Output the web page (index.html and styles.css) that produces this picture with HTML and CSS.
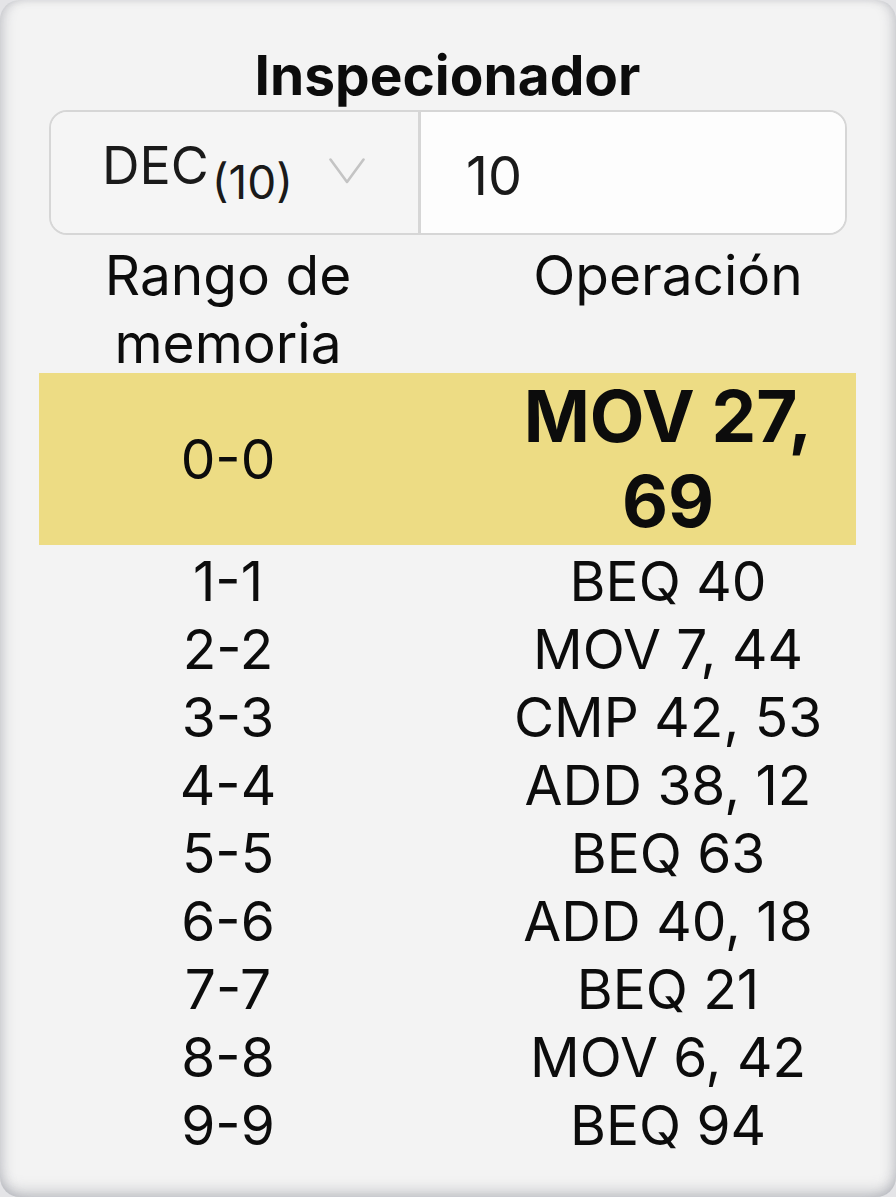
FILE: index.html
```html
<!DOCTYPE html>
<html lang="es">
<head>
<meta charset="utf-8">
<title>Inspecionador</title>
<link rel="stylesheet" href="styles.css">
</head>
<body>
<div class="panel">
  <h1 class="title">Inspecionador</h1>
  <div class="input-group">
    <div class="base-select">
      <span class="base-label">DEC<sub class="base-sub">(10)</sub></span>
      <svg class="chevron" viewBox="0 0 36 26" width="36" height="26" aria-hidden="true">
        <polyline points="1.5,1.5 18,24 34.5,1.5" fill="none" stroke="#c4c4c4" stroke-width="2.6" stroke-linecap="round" stroke-linejoin="round"/>
      </svg>
    </div>
    <div class="value-field">10</div>
  </div>
  <div class="table">
    <div class="row head">
      <div class="cell c1">Rango de<br>memoria</div>
      <div class="cell c2">Operación</div>
    </div>
    <div class="row current">
      <div class="cell c1">0-0</div>
      <div class="cell c2">MOV 27,<br>69</div>
    </div>
    <div class="row"><div class="cell c1">1-1</div><div class="cell c2">BEQ 40</div></div>
    <div class="row"><div class="cell c1">2-2</div><div class="cell c2">MOV 7, 44</div></div>
    <div class="row"><div class="cell c1">3-3</div><div class="cell c2">CMP 42, 53</div></div>
    <div class="row"><div class="cell c1">4-4</div><div class="cell c2">ADD 38, 12</div></div>
    <div class="row"><div class="cell c1">5-5</div><div class="cell c2">BEQ 63</div></div>
    <div class="row"><div class="cell c1">6-6</div><div class="cell c2">ADD 40, 18</div></div>
    <div class="row"><div class="cell c1">7-7</div><div class="cell c2">BEQ 21</div></div>
    <div class="row"><div class="cell c1">8-8</div><div class="cell c2">MOV 6, 42</div></div>
    <div class="row"><div class="cell c1">9-9</div><div class="cell c2">BEQ 94</div></div>
  </div>
</div>
</body>
</html>
```
FILE: styles.css
```css
html, body {
  margin: 0;
  padding: 0;
  background: #e4e4e7;
}
body {
  font-family: Inter, "Liberation Sans", Arial, sans-serif;
  color: #0c0c0c;
}
.panel {
  box-sizing: border-box;
  width: 896px;
  height: 1197px;
  border-radius: 20px;
  background: #f3f3f3;
  box-shadow:
    inset 10px 0 12px -6px rgba(120, 122, 135, 0.3),
    inset -10px 0 12px -6px rgba(120, 122, 135, 0.3),
    inset 0 -14px 14px -8px rgba(120, 122, 135, 0.34),
    inset 0 6px 10px -6px rgba(120, 122, 135, 0.15);
  padding: 40px 40px 0 39px;
  display: flex;
  flex-direction: column;
  overflow: hidden;
}
.title {
  margin: 0;
  text-align: center;
  font-size: 55px;
  font-weight: 700;
  line-height: 70px;
}
.input-group {
  margin: 0 9px 0 10px;
  height: 125px;
  box-sizing: border-box;
  border: 2px solid #d6d6d6;
  border-radius: 18px;
  display: flex;
  overflow: hidden;
}
.base-select {
  width: 370px;
  flex: none;
  box-sizing: border-box;
  background: #f5f5f5;
  border-right: 3px solid #d6d6d6;
  display: flex;
  align-items: center;
  padding-left: 51px;
  gap: 36px;
}
.base-label {
  font-size: 52px;
  line-height: 1;
  color: #1a1a1a;
  position: relative;
  top: 0;
}
.base-sub {
  font-size: 46px;
  vertical-align: -15px;
  line-height: 1;
  margin-left: 3px;
}
.chevron {
  display: block;
  margin-top: -4px;
}
.value-field {
  flex: 1;
  background: #fdfdfd;
  display: flex;
  align-items: center;
  padding-left: 45px;
  font-size: 54px;
  color: #1a1a1a;
  padding-top: 5px;
}
.table {
  display: flex;
  flex-direction: column;
  margin-top: 2px;
}
.row {
  display: grid;
  grid-template-columns: 378px 1fr;
  font-size: 55px;
  line-height: 68px;
}
.cell {
  text-align: center;
}
.c2 {
  padding-left: 63px;
}
.head {
  padding-top: 4px;
  margin-bottom: -4px;
}
.current {
  background: #eddc84;
  align-items: center;
  height: 172px;
  margin-bottom: 2px;
}
.current .c2 {
  font-weight: 700;
  font-size: 71px;
  line-height: 85px;
}
```
